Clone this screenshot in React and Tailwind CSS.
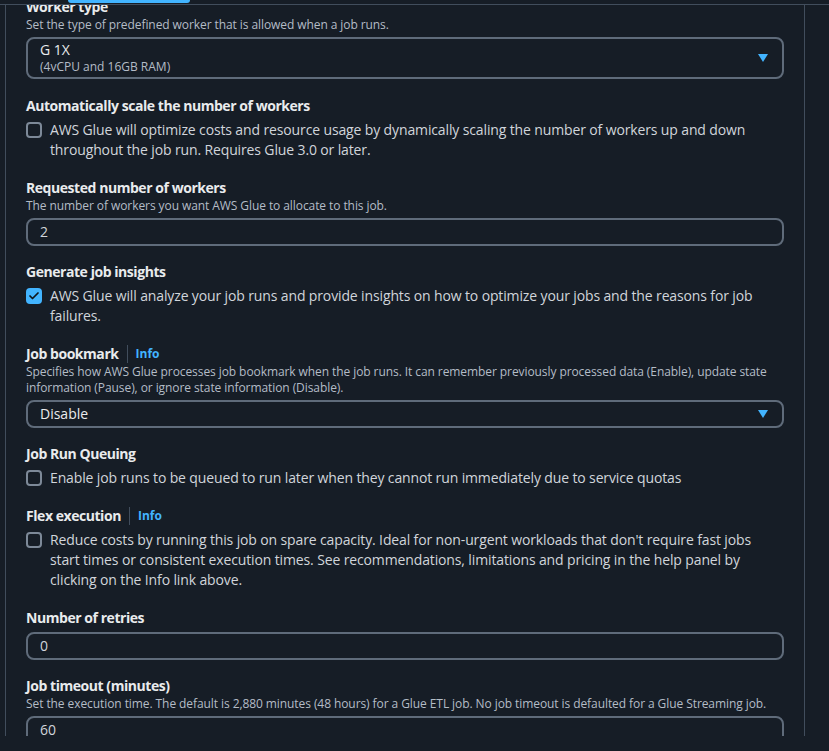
import { Check } from 'lucide-react';

const FONT = { fontFamily: '"Open Sans", "Noto Sans", Arial, sans-serif' };

function Label({ children, info }) {
  return (
    <div className="flex items-center text-sm leading-5 font-bold tracking-[-0.45px] text-[#e9ebed]">
      <span>{children}</span>
      {info && (
        <>
          <span className="mx-2 h-[18px] w-px bg-[#414d5c]" />
          <span className="text-xs font-bold tracking-normal text-[#42b4ff]">Info</span>
        </>
      )}
    </div>
  );
}

function Desc({ children }) {
  return <p className="text-xs leading-4 tracking-[-0.08px] text-[#b4bcc6]">{children}</p>;
}

function Caret() {
  return (
    <svg width="10" height="8" viewBox="0 0 10 8" className="shrink-0">
      <path d="M0 0 H10 L5 8 Z" fill="#42b4ff" />
    </svg>
  );
}

function Checkbox({ checked, children }) {
  return (
    <div className="mt-1 flex items-start gap-2 text-sm leading-5 tracking-[-0.13px] text-[#d1d5db]">
      {checked ? (
        <span className="mt-[2px] flex h-4 w-4 shrink-0 items-center justify-center rounded-[4px] bg-[#42b4ff]">
          <Check className="h-3 w-3 text-[#0f141a]" strokeWidth={3.5} />
        </span>
      ) : (
        <span className="mt-[2px] h-4 w-4 shrink-0 rounded-[4px] border-2 border-[#7d8998]" />
      )}
      <span>{children}</span>
    </div>
  );
}

function TextInput({ value }) {
  return (
    <div className="mt-1 flex h-[28px] items-center rounded-lg border-2 border-[#5f6b7a] px-3 text-sm text-[#d1d5db]">
      {value}
    </div>
  );
}

export default function App() {
  return (
    <div className="min-h-[751px] w-[829px] bg-[#161d26]" style={FONT}>
      <div className="h-[4px]">
        <div className="ml-[68px] h-[3px] w-[122px] rounded-b bg-[#42b4ff]" />
      </div>
      <div className="border-t border-[#414d5c]">
        <div className="ml-[5px] h-[731px] w-[800px] overflow-hidden border-x border-[#414d5c] px-5">
          <div className="mt-[-8px] flex flex-col">
            <Label>Worker type</Label>
            <Desc>Set the type of predefined worker that is allowed when a job runs.</Desc>
            <div className="mt-1 flex h-[42px] items-center justify-between rounded-lg border-2 border-[#5f6b7a] pl-3 pr-[14px]">
              <div>
                <div className="text-sm leading-[18px] text-[#e9ebed]">G 1X</div>
                <div className="text-xs leading-4 text-[#b4bcc6]">(4vCPU and 16GB RAM)</div>
              </div>
              <Caret />
            </div>

            <div className="mt-[17px]">
              <Label>Automatically scale the number of workers</Label>
              <Checkbox>
                AWS Glue will optimize costs and resource usage by dynamically scaling the number of workers up and down
                <br />
                throughout the job run. Requires Glue 3.0 or later.
              </Checkbox>
            </div>

            <div className="mt-[18px]">
              <Label>Requested number of workers</Label>
              <Desc>The number of workers you want AWS Glue to allocate to this job.</Desc>
              <TextInput value="2" />
            </div>

            <div className="mt-4">
              <Label>Generate job insights</Label>
              <Checkbox checked>
                AWS Glue will analyze your job runs and provide insights on how to optimize your jobs and the reasons for job
                <br />
                failures.
              </Checkbox>
            </div>

            <div className="mt-[18px]">
              <Label info>Job bookmark</Label>
              <Desc>
                Specifies how AWS Glue processes job bookmark when the job runs. It can remember previously processed data
                (Enable), update state
                <br />
                information (Pause), or ignore state information (Disable).
              </Desc>
              <div className="mt-1 flex h-[28px] items-center justify-between rounded-lg border-2 border-[#5f6b7a] pl-3 pr-[14px] text-sm text-[#e9ebed]">
                <span>Disable</span>
                <Caret />
              </div>
            </div>

            <div className="mt-4">
              <Label>Job Run Queuing</Label>
              <Checkbox>Enable job runs to be queued to run later when they cannot run immediately due to service quotas</Checkbox>
            </div>

            <div className="mt-[18px]">
              <Label info>Flex execution</Label>
              <Checkbox>
                Reduce costs by running this job on spare capacity. Ideal for non-urgent workloads that don't require fast jobs
                <br />
                start times or consistent execution times. See recommendations, limitations and pricing in the help panel by
                <br />
                clicking on the Info link above.
              </Checkbox>
            </div>

            <div className="mt-[18px]">
              <Label>Number of retries</Label>
              <TextInput value="0" />
            </div>

            <div className="mt-4">
              <Label>Job timeout (minutes)</Label>
              <Desc>
                Set the execution time. The default is 2,880 minutes (48 hours) for a Glue ETL job. No job timeout is defaulted
                for a Glue Streaming job.
              </Desc>
              <TextInput value="60" />
            </div>
          </div>
        </div>
      </div>
    </div>
  );
}
